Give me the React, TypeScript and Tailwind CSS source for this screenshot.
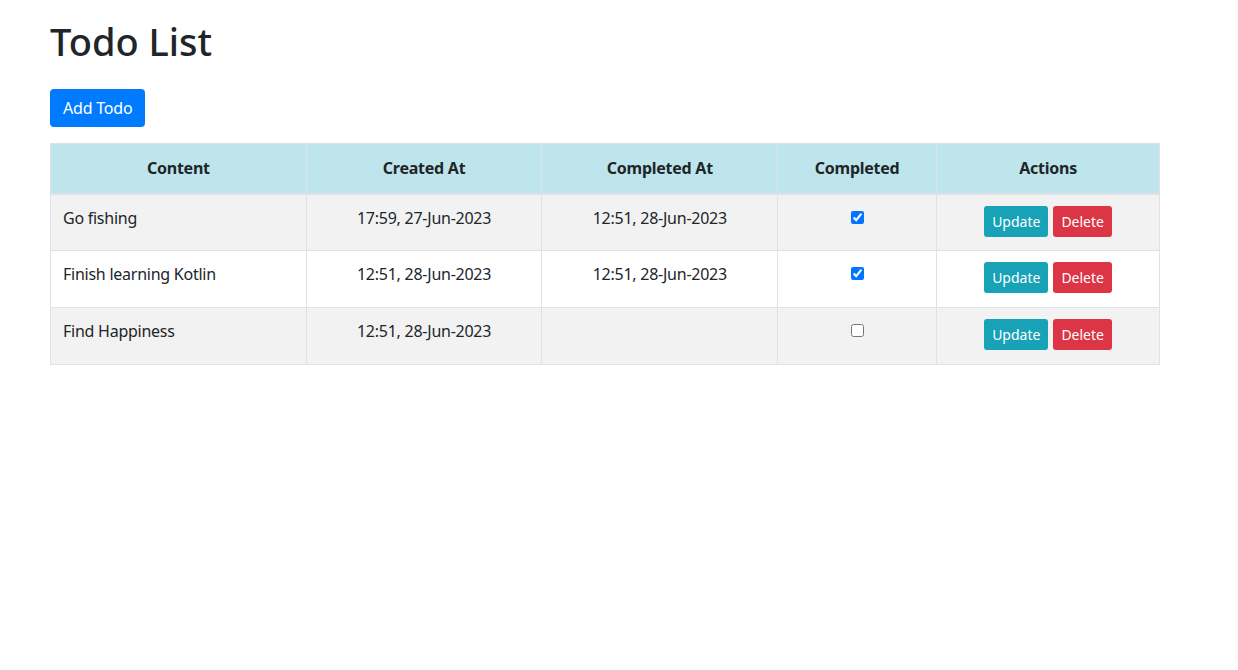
import React from "react";

const rows = [
  { content: "Go fishing", created: "17:59, 27-Jun-2023", completedAt: "12:51, 28-Jun-2023", done: true },
  { content: "Finish learning Kotlin", created: "12:51, 28-Jun-2023", completedAt: "12:51, 28-Jun-2023", done: true },
  { content: "Find Happiness", created: "12:51, 28-Jun-2023", completedAt: "", done: false },
];

export default function App() {
  return (
    <div className="min-h-screen bg-white text-[#212529] pl-[50px] pt-[17px]" style={{ fontFamily: '"Noto Sans", "Open Sans", sans-serif' }}>
      <h1 className="text-[38px] leading-[48px] font-medium mb-[24px]">Todo List</h1>
      <button className="bg-[#007bff] text-white text-[16px] leading-[24px] px-[13px] py-[6px] rounded-[4px] h-[38px] tracking-[-0.2px]">Add Todo</button>
      <table className="mt-[16px] w-[1110px] border-collapse text-[16px] leading-[24px] tracking-[-0.25px]">
        <colgroup>
          <col className="w-[256px]" />
          <col className="w-[236px]" />
          <col className="w-[236px]" />
          <col className="w-[159px]" />
          <col className="w-[223px]" />
        </colgroup>
        <thead>
          <tr className="bg-[#bee5eb]">
            {["Content", "Created At", "Completed At", "Completed", "Actions"].map((h) => (
              <th key={h} className="border border-[#dee2e6] border-b-2 pt-[12px] pb-[12px] px-[12px] text-center font-bold align-top h-[50px]">{h}</th>
            ))}
          </tr>
        </thead>
        <tbody>
          {rows.map((r, i) => (
            <tr key={i} className={i % 2 === 0 ? "bg-[#f2f2f2]" : "bg-white"}>
              <td className="border border-[#dee2e6] pt-[11px] pb-[13px] px-[12px] align-top h-[57px]">{r.content}</td>
              <td className="border border-[#dee2e6] pt-[11px] pb-[13px] px-[12px] align-top text-center">{r.created}</td>
              <td className="border border-[#dee2e6] pt-[11px] pb-[13px] px-[12px] align-top text-center">{r.completedAt}</td>
              <td className="border border-[#dee2e6] pt-[11px] pb-[13px] px-[12px] align-top text-center">
                <input type="checkbox" defaultChecked={r.done} className="w-[13px] h-[13px] accent-[#0075ff] align-top mt-[5px]" />
              </td>
              <td className="border border-[#dee2e6] pt-[11px] pb-[13px] px-[12px] align-top text-center">
                <div className="flex justify-center gap-[5px] tracking-normal">
                  <button className="bg-[#17a2b8] text-white text-[14px] leading-[21px] px-[8px] py-[4px] rounded-[3px] h-[31px]">Update</button>
                  <button className="bg-[#dc3545] text-white text-[14px] leading-[21px] px-[8px] py-[4px] rounded-[3px] h-[31px]">Delete</button>
                </div>
              </td>
            </tr>
          ))}
        </tbody>
      </table>
    </div>
  );
}
